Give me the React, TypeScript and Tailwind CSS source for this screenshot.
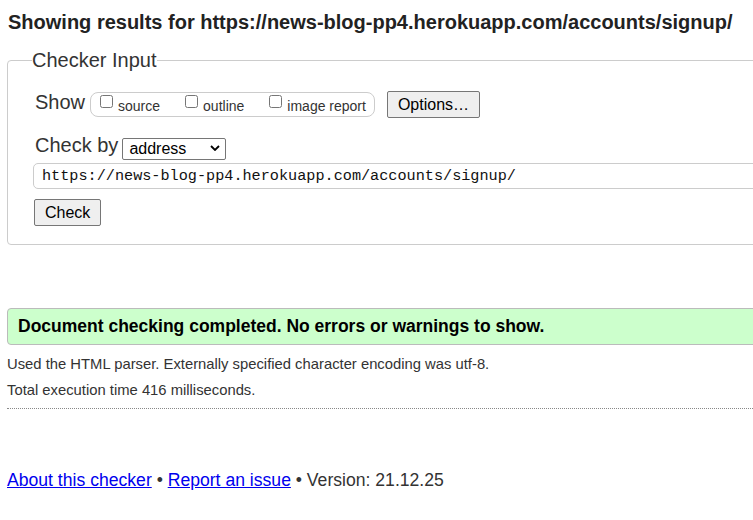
const options = ["source", "outline", "image report"]

export default function App() {
  return (
    <div className="h-[520px] w-[753px] overflow-hidden bg-white pt-[11px] font-['Liberation_Sans',Arial,sans-serif] text-[#333]">
      <div className="w-[820px]">
        <h2 className="pl-[8px] text-[20px] font-bold leading-[23px] text-[#222]">
          Showing results for https://news-blog-pp4.herokuapp.com/accounts/signup/
        </h2>

        <fieldset className="mx-[7px] mt-[15px] rounded-[4px] border border-[#ccc] pb-[18px] pl-[25px] pr-4 pt-[19px]">
          <legend className="-ml-px text-[20px] leading-[23px] text-[#333]">Checker Input</legend>

          <div className="ml-[2px] flex h-[27px] items-center">
            <span className="-mt-[4px] text-[20px] leading-[23px]">Show</span>
            <div className="ml-[5px] flex h-[25px] items-center gap-[25px] rounded-[8px] border border-[#ccc] pl-[9px] pr-[8px]">
              {options.map((o) => (
                <label key={o} className="flex items-center gap-[5px] text-[14px] leading-[16px] text-[#333]">
                  <input type="checkbox" className="-mt-[6px] m-0 h-[13px] w-[13px]" />
                  <span className="mt-[2px]">{o}</span>
                </label>
              ))}
            </div>
            <button className="ml-[12px] h-[27px] rounded-[2px] border border-[#767676] bg-[#efefef] px-[10px] text-[16px] text-black">
              Options…
            </button>
          </div>

          <div className="ml-[2px] mt-[19px] flex items-start">
            <span className="-mt-[3px] text-[20px] leading-[23px]">Check by</span>
            <div className="relative ml-[4px]">
              <select className="h-[22px] w-[104px] appearance-none rounded-[2px] border border-[#767676] bg-white pl-[6px] text-[16px] leading-[20px] text-black">
                <option>address</option>
              </select>
              <svg className="pointer-events-none absolute right-[6px] top-[8px]" width="10" height="6" viewBox="0 0 10 6">
                <path d="M1 1l4 4 4-4" fill="none" stroke="#000" strokeWidth="1.8" />
              </svg>
            </div>
          </div>

          <input
            type="text"
            readOnly
            value="https://news-blog-pp4.herokuapp.com/accounts/signup/"
            className="mt-[2px] block h-[26px] w-full rounded-[5px] border border-[#ccc] pl-[8px] font-['Liberation_Mono',monospace] text-[15.2px] text-[#111] outline-none"
          />

          <button className="ml-px mt-[10px] block h-[27px] rounded-[2px] border border-[#767676] bg-[#efefef] px-[10px] text-[16px] text-black">
            Check
          </button>
        </fieldset>

        <div className="mx-[7px] mt-[63px] flex h-[37px] items-center rounded-[4px] border border-[#bbb] bg-[#ccffcc] pl-[10px] text-[17.5px] font-bold text-black">
          Document checking completed. No errors or warnings to show.
        </div>

        <div className="mt-[6px] pl-[7px] text-[14.8px] leading-[26px] text-[#333]">
          <p>Used the HTML parser. Externally specified character encoding was utf-8.</p>
          <p>Total execution time 416 milliseconds.</p>
        </div>

        <hr className="mx-[7px] mt-[5px] border-0 border-t border-dotted border-[#888]" />

        <p className="mt-[61px] pl-[7px] text-[17.6px] leading-[21px] text-[#333]">
          <a href="#" className="text-[#0000ee] underline">About this checker</a>
          {" • "}
          <a href="#" className="text-[#0000ee] underline">Report an issue</a>
          {" • Version: 21.12.25"}
        </p>
      </div>
    </div>
  )
}
